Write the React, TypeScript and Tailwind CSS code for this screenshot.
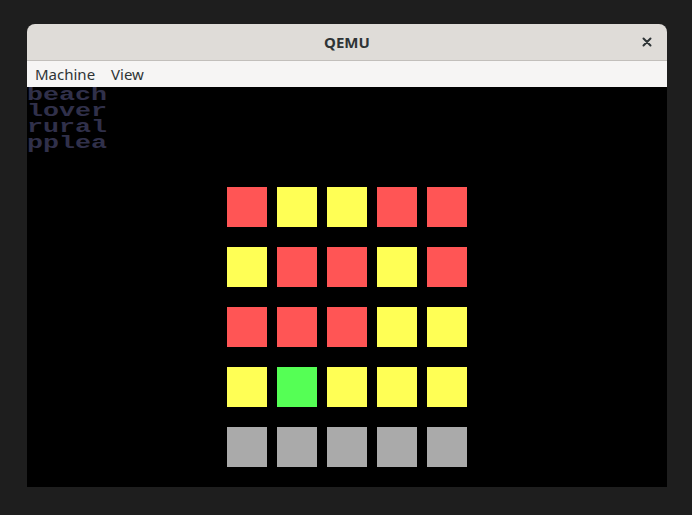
import React from "react";

const R = "bg-[#ff5555]";
const Y = "bg-[#ffff55]";
const G = "bg-[#55ff55]";
const S = "bg-[#aaaaaa]";

const rows: string[][] = [
  [R, Y, Y, R, R],
  [Y, R, R, Y, R],
  [R, R, R, Y, Y],
  [Y, G, Y, Y, Y],
  [S, S, S, S, S],
];

const words = ["beach", "lover", "rural", "pplea"];

export default function App() {
  return (
    <div className="w-[692px] h-[515px] bg-[#1e1e1e] pt-[24px] pl-[27px] overflow-hidden">
      <div className="w-[640px] rounded-t-[8px] overflow-hidden">
        <div
          className="relative h-[37px] bg-[#dfdcd8] border-b border-[#c2bfbb] flex items-center justify-center"
          style={{ fontFamily: '"Noto Sans", "DejaVu Sans", sans-serif' }}
        >
          <span className="text-[15px] font-bold text-[#2e3436]">QEMU</span>
          <span className="absolute right-[12px] top-[10px] w-[16px] h-[16px] flex items-center justify-center">
            <svg width="10" height="10" viewBox="0 0 10 10">
              <path d="M1.5 1.5 L8.5 8.5 M8.5 1.5 L1.5 8.5" stroke="#2e3436" strokeWidth="2" strokeLinecap="round" />
            </svg>
          </span>
        </div>
        <div
          className="h-[26px] bg-[#f6f5f4] flex items-center pl-[8px] gap-[16px] text-[15px] text-[#2e3436]"
          style={{ fontFamily: '"Noto Sans", "DejaVu Sans", sans-serif' }}
        >
          <span>Machine</span>
          <span>View</span>
        </div>
        <div className="relative h-[400px] bg-black">
          <div className="absolute left-0 top-0 flex flex-col">
            {words.map((w) => (
              <div
                key={w}
                className="h-[16px] leading-[16px] text-[18px] font-bold text-[#30304a] origin-left scale-x-[1.481] whitespace-pre"
                style={{ fontFamily: '"Liberation Mono", "DejaVu Sans Mono", monospace' }}
              >
                {w}
              </div>
            ))}
          </div>
          <div className="pt-[100px] pl-[200px] flex flex-col gap-[20px]">
            {rows.map((r, i) => (
              <div key={i} className="flex gap-[10px]">
                {r.map((c, j) => (
                  <div key={j} className={`w-[40px] h-[40px] ${c}`} />
                ))}
              </div>
            ))}
          </div>
        </div>
      </div>
    </div>
  );
}
